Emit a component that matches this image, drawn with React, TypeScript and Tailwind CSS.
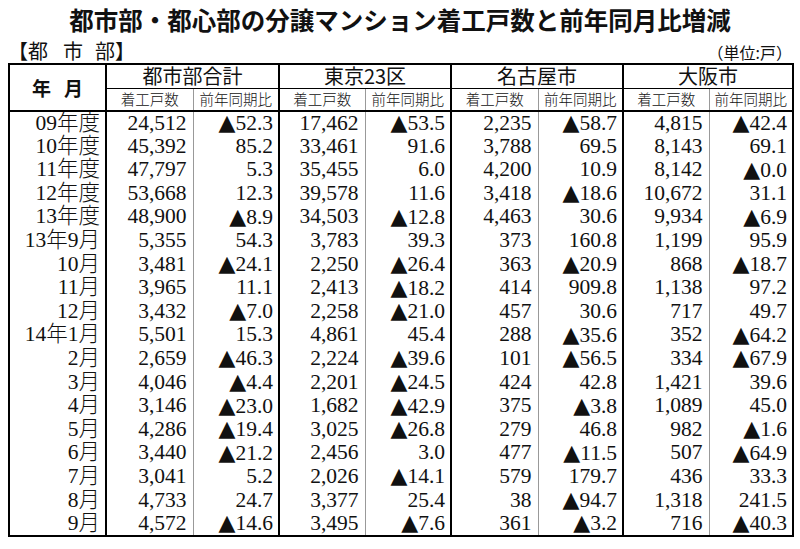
import React from "react";

const GROUPS = ["都市部合計", "東京23区", "名古屋市", "大阪市"];

const ROWS: string[][] = [
  ["09年度", "24,512", "▲52.3", "17,462", "▲53.5", "2,235", "▲58.7", "4,815", "▲42.4"],
  ["10年度", "45,392", "85.2", "33,461", "91.6", "3,788", "69.5", "8,143", "69.1"],
  ["11年度", "47,797", "5.3", "35,455", "6.0", "4,200", "10.9", "8,142", "▲0.0"],
  ["12年度", "53,668", "12.3", "39,578", "11.6", "3,418", "▲18.6", "10,672", "31.1"],
  ["13年度", "48,900", "▲8.9", "34,503", "▲12.8", "4,463", "30.6", "9,934", "▲6.9"],
  ["13年9月", "5,355", "54.3", "3,783", "39.3", "373", "160.8", "1,199", "95.9"],
  ["10月", "3,481", "▲24.1", "2,250", "▲26.4", "363", "▲20.9", "868", "▲18.7"],
  ["11月", "3,965", "11.1", "2,413", "▲18.2", "414", "909.8", "1,138", "97.2"],
  ["12月", "3,432", "▲7.0", "2,258", "▲21.0", "457", "30.6", "717", "49.7"],
  ["14年1月", "5,501", "15.3", "4,861", "45.4", "288", "▲35.6", "352", "▲64.2"],
  ["2月", "2,659", "▲46.3", "2,224", "▲39.6", "101", "▲56.5", "334", "▲67.9"],
  ["3月", "4,046", "▲4.4", "2,201", "▲24.5", "424", "42.8", "1,421", "39.6"],
  ["4月", "3,146", "▲23.0", "1,682", "▲42.9", "375", "▲3.8", "1,089", "45.0"],
  ["5月", "4,286", "▲19.4", "3,025", "▲26.8", "279", "46.8", "982", "▲1.6"],
  ["6月", "3,440", "▲21.2", "2,456", "3.0", "477", "▲11.5", "507", "▲64.9"],
  ["7月", "3,041", "5.2", "2,026", "▲14.1", "579", "179.7", "436", "33.3"],
  ["8月", "4,733", "24.7", "3,377", "25.4", "38", "▲94.7", "1,318", "241.5"],
  ["9月", "4,572", "▲14.6", "3,495", "▲7.6", "361", "▲3.2", "716", "▲40.3"],
];

// ▲ = decrease; DejaVu's triangle is close to the big one in the print
function Ratio({ v }: { v: string }) {
  if (!v.startsWith("▲")) return <>{v}</>;
  return (
    <>
      <span className="font-['DejaVu_Sans',sans-serif] text-[22px]">▲</span>
      {v.slice(1)}
    </>
  );
}

export default function App() {
  return (
    <div className="w-[800px] h-[549px] bg-white text-[#111] font-['Noto_Sans_CJK_JP',sans-serif] overflow-hidden">
      {/* title */}
      <div className="h-[38px] pt-[6px] text-center text-[24.5px] leading-[28px] font-bold">
        都市部・都心部の分譲マンション着工戸数と前年同月比増減
      </div>

      {/* section label + unit */}
      <div className="h-[25px] flex items-center justify-between pl-[8px] pr-[8px]">
        <div className="text-[20px] leading-none">
          <span>【都</span>
          <span className="ml-[15px]">市</span>
          <span className="ml-[12px]">部】</span>
        </div>
        <div className="text-[16px] leading-none pt-[2px]">（単位:戸）</div>
      </div>

      {/* table */}
      <table className="ml-[8px] w-[785px] table-fixed border-collapse border-2 border-black">
        <colgroup>
          <col className="w-[97px]" />
          <col className="w-[87px]" />
          <col className="w-[86px]" />
          <col className="w-[86px]" />
          <col className="w-[86px]" />
          <col className="w-[87px]" />
          <col className="w-[85px]" />
          <col className="w-[86px]" />
          <col className="w-[84px]" />
        </colgroup>
        <thead>
          <tr className="h-[24px]">
            <th
              rowSpan={2}
              className="border-r-2 border-b-2 border-black text-[19px] font-bold leading-none p-0"
            >
              <span className="tracking-[13px]">年</span>月
            </th>
            {GROUPS.map((g) => (
              <th
                key={g}
                colSpan={2}
                className="border-r-2 border-b border-black text-[20px] font-normal leading-none p-0"
              >
                {g}
              </th>
            ))}
          </tr>
          <tr className="h-[23px]">
            {GROUPS.map((g) => (
              <React.Fragment key={g}>
                <th className="border-r border-r-[#999] border-b-2 border-b-black text-[14.5px] font-light leading-none p-0">
                  着工戸数
                </th>
                <th className="border-r-2 border-b-2 border-black text-[14.5px] font-light leading-none p-0">
                  前年同期比
                </th>
              </React.Fragment>
            ))}
          </tr>
        </thead>
        <tbody className="font-['Liberation_Serif','Noto_Sans_CJK_JP',serif] text-[21.5px] leading-none">
          {ROWS.map((r) => (
            <tr key={r[0]} className="h-[23.6px]">
              <td className="border-r-2 border-black text-right pr-[5px] p-0 font-light">{r[0]}</td>
              {[0, 1, 2, 3].map((i) => (
                <React.Fragment key={i}>
                  <td className="border-r border-r-[#999] text-right pr-[6px] p-0">{r[1 + i * 2]}</td>
                  <td className="border-r-2 border-black text-right pr-[5px] p-0 whitespace-nowrap">
                    <Ratio v={r[2 + i * 2]} />
                  </td>
                </React.Fragment>
              ))}
            </tr>
          ))}
        </tbody>
      </table>
    </div>
  );
}
